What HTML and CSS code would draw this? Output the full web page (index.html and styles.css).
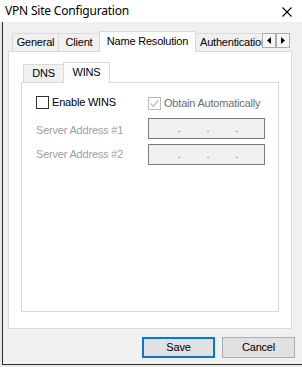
FILE: index.html
```html
<!DOCTYPE html>
<html>
<head>
<meta charset="utf-8">
<link rel="stylesheet" href="styles.css">
</head>
<body>
<div class="window">
  <div class="titlebar">
    <span class="title">VPN Site Configuration</span>
    <svg class="close" width="10" height="10" viewBox="0 0 10 10"><path d="M0.5 0.5 L9.5 9.5 M9.5 0.5 L0.5 9.5" stroke="#000" stroke-width="1.1" fill="none"/></svg>
  </div>
  <div class="frame">
    <div class="tabrow">
      <div class="strip">
        <div class="tab w-general">General</div>
        <div class="tab w-client">Client</div>
        <div class="tab sel w-name">Name Resolution</div>
        <div class="tab w-auth">Authentication</div>
      </div>
      <div class="arrows">
        <div class="arr"><svg width="4" height="7" viewBox="0 0 4 7"><path d="M4 0 L0 3.5 L4 7 Z" fill="#000"/></svg></div>
        <div class="arr"><svg width="4" height="7" viewBox="0 0 4 7"><path d="M0 0 L4 3.5 L0 7 Z" fill="#000"/></svg></div>
      </div>
    </div>
    <div class="panel">
      <div class="itabs">
        <div class="tab w-dns">DNS</div>
        <div class="tab sel w-wins">WINS</div>
      </div>
      <div class="ipanel">
        <div class="grid">
          <label class="check">
            <span class="cb"></span>
            <span>Enable WINS</span>
          </label>
          <label class="check dis obtain">
            <span class="cb"><svg width="11" height="11" viewBox="0 0 11 11"><path d="M1.5 5.5 L4.2 8.2 L9.5 2.2" stroke="#bcbcbc" stroke-width="1.3" fill="none"/></svg></span>
            <span>Obtain Automatically</span>
          </label>
          <div class="lbl lbl1">Server Address #1</div>
          <div class="ip"><span>.</span><span>.</span><span>.</span></div>
          <div class="lbl lbl2">Server Address #2</div>
          <div class="ip"><span>.</span><span>.</span><span>.</span></div>
        </div>
      </div>
    </div>
    <div class="buttons">
      <button class="btn def">Save</button>
      <button class="btn">Cancel</button>
    </div>
  </div>
</div>
</body>
</html>
```
FILE: styles.css
```css
* { box-sizing: border-box; }
body {
  margin: 0;
  background: #e9e9e9;
  font-family: "Liberation Sans", Arial, sans-serif;
  font-size: 11px;
  letter-spacing: -0.2px;
  color: #000;
}
.window { width: 302px; height: 367px; overflow: hidden; }

.titlebar {
  height: 22px;
  background: #fff;
  display: flex;
  align-items: center;
  justify-content: space-between;
  padding: 0 10px 0 5px;
}
.title {
  font-family: "Noto Sans", sans-serif;
  font-size: 12px;
  letter-spacing: -0.2px;
  line-height: 22px;
}
.close { margin-top: 2px; }

.frame {
  margin-left: 2px;
  border-left: 1px solid #2b2b2b;
  border-bottom: 1px solid #2b2b2b;
  background: #f0f0f0;
  padding: 9px 7px 6px 5px;
}

.tabrow {
  display: flex;
  align-items: flex-start;
  height: 21px;
  margin: 0 0 -1px 4px;
  position: relative;
  z-index: 1;
}
.strip {
  display: flex;
  align-items: flex-end;
  width: 250px;
  height: 21px;
  overflow: hidden;
}
.tab {
  flex: none;
  height: 18px;
  margin-bottom: 1px;
  margin-right: -1px;
  border: 1px solid #d9d9d9;
  border-bottom: 0;
  background: #f0f0f0;
  line-height: 17px;
  text-align: center;
  white-space: nowrap;
}
.tab.sel {
  height: 21px;
  margin-bottom: 0;
  background: #fff;
  line-height: 18px;
  position: relative;
  z-index: 2;
}
.w-general { width: 47px; }
.w-client { width: 42px; }
.w-name { width: 97px; }
.w-auth { padding: 0 6px 0 4px; text-align: left; }
.w-dns { width: 41px; }
.w-wins { width: 47px; }

.arrows {
  display: flex;
  margin-top: 2px;
}
.arr {
  width: 14px;
  height: 15px;
  border: 1px solid #adadad;
  background: #f7f7f7;
  display: flex;
  align-items: center;
  justify-content: center;
}

.panel {
  width: 284px;
  height: 278px;
  border: 1px solid #d9d9d9;
  background: #fff;
  padding: 10px 0 0 12px;
}
.itabs {
  display: flex;
  align-items: flex-end;
  height: 21px;
  margin: 0 0 -1px 2px;
  position: relative;
  z-index: 1;
}
.itabs .tab { background: #f0f0f0; }
.itabs .tab.sel { background: #fff; }

.ipanel {
  width: 258px;
  height: 230px;
  border: 1px solid #d9d9d9;
  background: #fff;
  padding: 13px 0 0 14px;
}

.grid {
  display: grid;
  grid-template-columns: 112px 117px;
  row-gap: 5px;
}
.check {
  display: flex;
  align-items: center;
  gap: 3px;
  height: 13px;
  margin-bottom: 4px;
  line-height: 13px;
  white-space: nowrap;
}
.cb {
  width: 13px;
  height: 13px;
  border: 1px solid #333;
  background: #fff;
  display: flex;
  align-items: center;
  justify-content: center;
  flex: none;
}
.check.dis { color: #6d6d6d; }
.check.dis .cb { border-color: #bcbcbc; }
.obtain { margin-top: 1px; margin-bottom: 3px; }

.lbl {
  color: #a0a0a0;
  line-height: 13px;
  white-space: nowrap;
}
.lbl1 { padding-top: 6px; }
.lbl2 { padding-top: 4px; }

.ip {
  height: 21px;
  border: 1px solid #7a7a7a;
  background: #f0f0f0;
  display: flex;
  justify-content: space-evenly;
  padding-left: 3px;
  line-height: 18px;
  color: #6d6d6d;
}

.buttons {
  display: flex;
  justify-content: flex-end;
  gap: 7px;
  margin-top: 8px;
}
.btn {
  width: 73px;
  height: 21px;
  border: 1px solid #adadad;
  background: #e1e1e1;
  font-family: "Liberation Sans", Arial, sans-serif;
  font-size: 11px;
  letter-spacing: -0.2px;
  color: #000;
  padding: 0;
  line-height: 19px;
  text-align: center;
}
.btn.def { border: 2px solid #0078d7; line-height: 17px; }
```
